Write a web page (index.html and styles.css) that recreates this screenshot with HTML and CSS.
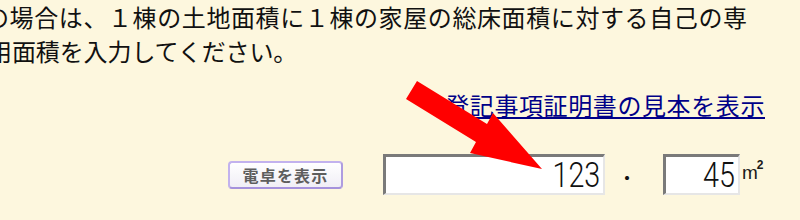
FILE: index.html
```html
<!DOCTYPE html>
<html lang="ja">
<head>
<meta charset="utf-8">
<link rel="stylesheet" href="styles.css">
</head>
<body>
<div class="page">
  <div class="note">
    <div class="line1">の場合は、１棟の土地面積に１棟の家屋の総床面積に対する自己の専</div>
    <div class="line2">用面積を入力してください。</div>
  </div>
  <div class="link-row"><a href="#" class="sample-link">登記事項証明書の見本を表示</a></div>
  <div class="form-row">
    <button class="calc-btn" type="button">電卓を表示</button>
    <div class="num-box wide"><span class="digits">123</span></div>
    <span class="dot">・</span>
    <div class="num-box narrow"><span class="digits">45</span></div>
    <span class="unit"><span class="m">m</span><span class="sq">2</span></span>
  </div>
  <svg class="arrow" width="800" height="220" viewBox="0 0 800 220">
    <polygon points="417,81 487,124 493,113 542,169 470,153 476,142 406,99" fill="#ff0000"/>
  </svg>
</div>
</body>
</html>
```
FILE: styles.css
```css
html, body {
  margin: 0;
  padding: 0;
}
body {
  background: #fdf7de;
  width: 800px;
  height: 220px;
  overflow: hidden;
}
.page {
  position: relative;
  width: 800px;
  height: 220px;
}
.note {
  font-family: "Noto Sans CJK JP", sans-serif;
  font-size: 24px;
  line-height: 34px;
  color: #111111;
  white-space: nowrap;
}
.line1 {
  margin-left: -15px;
  letter-spacing: 0.6px;
}
.line2 {
  margin-left: -12px;
  letter-spacing: -0.1px;
}
.link-row {
  margin-top: 20px;
  text-align: right;
  padding-right: 35px;
  font-family: "Noto Sans CJK JP", sans-serif;
  font-size: 24px;
  line-height: 34px;
  letter-spacing: 0.6px;
}
.sample-link {
  color: #000088;
  text-decoration: underline;
  text-decoration-thickness: 2px;
  text-underline-offset: 2px;
}
.form-row {
  display: flex;
  align-items: center;
  margin-left: 228px;
  margin-top: 32px;
}
.calc-btn {
  box-sizing: border-box;
  width: 115px;
  height: 28px;
  margin: 0 40px 0 0;
  padding: 0;
  border: 2px solid #c2b2ee;
  border-bottom-color: #a592dc;
  border-right-color: #ae9ce0;
  border-radius: 4px;
  background: linear-gradient(#ffffff, #f0eef6);
  color: #5e5e5e;
  font-family: "Noto Sans CJK JP", sans-serif;
  font-weight: bold;
  font-size: 16px;
  letter-spacing: 1.2px;
  line-height: 20px;
}
.num-box {
  box-sizing: border-box;
  height: 41px;
  background: #ffffff;
  border-top: 3px solid #7a7a7a;
  border-left: 3px solid #7a7a7a;
  border-right: 2px solid #e6e6e6;
  border-bottom: 2px solid #e6e6e6;
  display: flex;
  align-items: center;
  justify-content: flex-end;
  padding-right: 3px;
}
.wide { width: 222px; }
.narrow { width: 77px; }
.digits {
  display: inline-block;
  font-family: "Roboto", "Liberation Sans", sans-serif;
  font-weight: 300;
  font-size: 35px;
  line-height: 36px;
  color: #111111;
  transform: scaleX(0.82);
  transform-origin: right center;
  margin-top: 2px;
}
.dot {
  box-sizing: border-box;
  width: 58px;
  padding-left: 14px;
  font-family: "Noto Sans CJK JP", sans-serif;
  font-size: 16px;
  font-weight: bold;
  line-height: 16px;
  margin-top: 4px;
  color: #111111;
}
.unit {
  display: flex;
  align-items: flex-start;
  margin-left: 2px;
  align-self: flex-start;
  margin-top: 4px;
  font-family: "Liberation Sans", Arial, sans-serif;
  color: #1a1a1a;
}
.m {
  font-size: 19px;
  line-height: 20px;
  margin-top: 5px;
  letter-spacing: -1px;
}
.sq {
  font-size: 12px;
  line-height: 12px;
  font-weight: bold;
  margin-top: 1px;
}
.arrow {
  position: absolute;
  left: 0;
  top: 0;
  pointer-events: none;
}
```
